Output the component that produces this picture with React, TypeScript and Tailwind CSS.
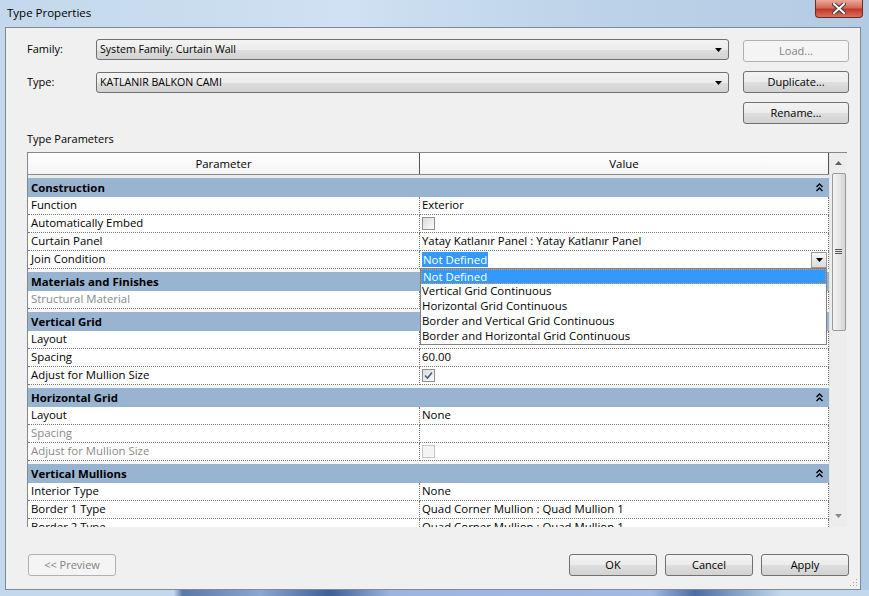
import React from "react";

type Row = {
  label: string;
  value?: string;
  check?: boolean;
  disabled?: boolean;
  combo?: boolean;
};

type Group = { name: string; rows: Row[] };

const groups: Group[] = [
  {
    name: "Construction",
    rows: [
      { label: "Function", value: "Exterior" },
      { label: "Automatically Embed", check: false },
      { label: "Curtain Panel", value: "Yatay Katlanır Panel : Yatay Katlanır Panel" },
      { label: "Join Condition", combo: true },
    ],
  },
  {
    name: "Materials and Finishes",
    rows: [{ label: "Structural Material", disabled: true, value: "" }],
  },
  {
    name: "Vertical Grid",
    rows: [
      { label: "Layout", value: "" },
      { label: "Spacing", value: "60.00" },
      { label: "Adjust for Mullion Size", check: true },
    ],
  },
  {
    name: "Horizontal Grid",
    rows: [
      { label: "Layout", value: "None" },
      { label: "Spacing", disabled: true, value: "" },
      { label: "Adjust for Mullion Size", disabled: true, check: false },
    ],
  },
  {
    name: "Vertical Mullions",
    rows: [
      { label: "Interior Type", value: "None" },
      { label: "Border 1 Type", value: "Quad Corner Mullion : Quad Mullion 1" },
      { label: "Border 2 Type", value: "Quad Corner Mullion : Quad Mullion 1" },
    ],
  },
];

const joinOptions = [
  "Not Defined",
  "Vertical Grid Continuous",
  "Horizontal Grid Continuous",
  "Border and Vertical Grid Continuous",
  "Border and Horizontal Grid Continuous",
];

const btnFace =
  "bg-[linear-gradient(#f3f3f3_0%,#ececec_50%,#dedede_50%,#d2d2d2_100%)] border border-[#707070] rounded-[3px]";

const Triangle = ({ color = "#000" }: { color?: string }) => (
  <svg width="7" height="4" viewBox="0 0 7 4">
    <path d="M0 0h7L3.5 4z" fill={color} />
  </svg>
);

const Chevrons = () => (
  <svg width="7" height="9" viewBox="0 0 7 9">
    <path d="M0.5 4L3.5 1L6.5 4M0.5 8L3.5 5L6.5 8" stroke="#000" strokeWidth="1.4" fill="none" />
  </svg>
);

const CheckBox = ({ checked, disabled }: { checked: boolean; disabled?: boolean }) => (
  <div
    className={`mt-[2px] h-[13px] w-[13px] border ${
      disabled
        ? "border-[#c6c6c6] bg-[#f4f4f4]"
        : "border-[#8e8f8f] bg-[linear-gradient(135deg,#dcdcdc,#fbfbfb)]"
    } flex items-center justify-center`}
  >
    {checked && (
      <svg width="9" height="9" viewBox="0 0 9 9">
        <path d="M1 4.5L3.5 7L8 1.5" stroke="#4d5f86" strokeWidth="1.6" fill="none" />
      </svg>
    )}
  </div>
);

const SelectBox = ({ text }: { text: string }) => (
  <div className={`flex h-[21px] w-[633px] items-center justify-between pl-[3px] pr-[6px] ${btnFace}`}>
    <span className="text-[10.6px]">{text}</span>
    <Triangle />
  </div>
);

const Button = ({ text, disabled, className = "" }: { text: string; disabled?: boolean; className?: string }) => (
  <div
    className={`flex h-[22px] items-center justify-center ${
      disabled
        ? "rounded-[3px] border border-[#adb2b5] bg-[#f4f4f4] text-[#838383]"
        : `${btnFace} text-black`
    } ${className}`}
  >
    {text}
  </div>
);

const ParamRow = ({ row }: { row: Row }) => (
  <div className="flex h-[18px] shrink-0">
    <div
      className={`w-[392px] shrink-0 truncate border-b border-r border-dotted border-[#7a7a7a] pl-[3px] leading-[15px] ${
        row.disabled ? "text-[#8a8a8a]" : "text-black"
      }`}
    >
      {row.label}
    </div>
    <div className="relative flex-1 border-b border-r border-dotted border-[#7a7a7a] pl-[2px] leading-[15px]">
      {row.check !== undefined && <CheckBox checked={row.check} disabled={row.disabled} />}
      {row.value !== undefined && <span>{row.value}</span>}
      {row.combo && (
        <>
          <div className="flex h-[17px] items-center justify-between bg-white pr-[1px]">
            <span className="bg-[#3399ff] px-[1px] leading-[15px] text-white">Not Defined</span>
            <div className="flex h-[16px] w-[16px] items-center justify-center border border-[#9a9a9a] bg-[linear-gradient(#f6f6f6,#dcdcdc)]">
              <Triangle />
            </div>
          </div>
          <div className="absolute left-0 right-[1px] top-[17px] z-10 flex flex-col border border-[#828282] bg-white">
            {joinOptions.map((o, i) => (
              <div
                key={o}
                className={`h-[15px] pl-[1px] leading-[13px] ${
                  i === 0 ? "border border-dotted border-[#e89a50] bg-[#3399ff] text-white" : "text-black"
                }`}
              >
                {o}
              </div>
            ))}
          </div>
        </>
      )}
    </div>
  </div>
);

const GroupHeader = ({ name, first }: { name: string; first?: boolean }) => (
  <div className={`shrink-0 ${first ? "pt-[3px] bg-[#ebebeb]" : "pt-[3px] bg-[#f5f5f5]"}`}>
    <div className="flex h-[19px] items-center justify-between bg-[#99b4d1] pl-[3px] pr-[6px] font-bold">
      <span className="leading-[15px]">{name}</span>
      <Chevrons />
    </div>
  </div>
);

export default function App() {
  return (
    <div className="flex h-[596px] w-[869px] flex-col overflow-hidden bg-[linear-gradient(90deg,#c3d8ec,#cfe1f2_40%,#bcd2e8_70%,#b2cbe4)] font-['Open_Sans',sans-serif] text-[11.4px] text-black">
      {/* title bar */}
      <div className="flex h-[27px] shrink-0 items-start justify-between">
        <div className="pl-[7px] pt-[4px] text-[11.5px]">Type Properties</div>
        <div className="mr-[6px] flex h-[18px] w-[48px] items-center justify-center rounded-b-[4px] border border-t-0 border-[#6b2a22] bg-[linear-gradient(#e9a99c,#d46a57_45%,#c0392b_55%,#d9705c)]">
          <svg width="14" height="11" viewBox="0 0 14 11">
            <path d="M2 1L12 10M12 1L2 10" stroke="#3a3a3a" strokeWidth="4" strokeLinecap="square" />
            <path d="M2 1L12 10M12 1L2 10" stroke="#ffffff" strokeWidth="2" strokeLinecap="square" />
          </svg>
        </div>
      </div>

      {/* client area */}
      <div className="relative ml-[5px] mr-[8px] flex h-[563px] shrink-0 flex-col border border-[#7e8a99] bg-[#f0f0f0]">
        <div className="flex">
          <div className="flex flex-col gap-[12px] pl-[21px] pt-[11px] text-[11px]">
            <div className="flex items-center">
              <span className="w-[69px]">Family:</span>
              <SelectBox text="System Family: Curtain Wall" />
            </div>
            <div className="flex items-center">
              <span className="w-[69px]">Type:</span>
              <SelectBox text="KATLANIR BALKON CAMI" />
            </div>
          </div>
          <div className="ml-[14px] flex flex-col gap-[9px] pt-[12px] text-[11px]">
            <Button text="Load..." disabled className="w-[106px]" />
            <Button text="Duplicate..." className="w-[106px]" />
            <Button text="Rename..." className="w-[106px]" />
          </div>
        </div>

        <div className="ml-[21px] mt-[8px] text-[11px] leading-[13px]">Type Parameters</div>

        {/* property grid */}
        <div className="ml-[21px] mt-[7px] flex h-[375px] w-[820px] overflow-hidden border-l border-t border-[#828790]">
          <div className="flex w-[801px] shrink-0 flex-col overflow-hidden bg-white">
            <div className="flex h-[22px] shrink-0 border-b border-[#8a8a8a] bg-[linear-gradient(#ffffff,#f4f4f4)]">
              <div className="flex w-[392px] shrink-0 items-center justify-center border-r border-[#555]">Parameter</div>
              <div className="flex flex-1 items-center justify-center border-r border-[#555]">Value</div>
            </div>
            {groups.map((g, gi) => (
              <React.Fragment key={g.name}>
                <GroupHeader name={g.name} first={gi === 0} />
                {g.rows.map((r) => (
                  <ParamRow key={g.name + r.label} row={r} />
                ))}
              </React.Fragment>
            ))}
          </div>
          {/* scrollbar */}
          <div className="flex w-[18px] shrink-0 flex-col items-center border-l border-[#e3e3e3] bg-[#ededed]">
            <div className="flex h-[19px] w-full items-center justify-center">
              <svg width="7" height="4" viewBox="0 0 7 4">
                <path d="M0 4h7L3.5 0z" fill="#606060" />
              </svg>
            </div>
            <div className="mt-[1px] flex h-[158px] w-[14px] items-center justify-center rounded-[2px] border border-[#9a9a9a] bg-[linear-gradient(90deg,#f4f4f4,#e6e6e6_50%,#d6d6d6)]">
              <svg width="7" height="6" viewBox="0 0 7 6">
                <path d="M0 0.5h7M0 2.5h7M0 4.5h7" stroke="#555" strokeWidth="1" />
              </svg>
            </div>
            <div className="flex-1" />
            <div className="flex h-[19px] w-full items-center justify-center pb-[4px]">
              <Triangle color="#8a8a8a" />
            </div>
          </div>
        </div>

        {/* bottom buttons */}
        <div className="mt-[27px] flex items-center pl-[22px] pr-[11px] text-[11px]">
          <Button text="<< Preview" disabled className="w-[88px]" />
          <div className="flex-1" />
          <div className="flex gap-[8px]">
            <Button text="OK" className="w-[88px]" />
            <Button text="Cancel" className="w-[88px]" />
            <Button text="Apply" className="w-[88px]" />
          </div>
        </div>

        <svg className="absolute bottom-[2px] right-[2px]" width="10" height="10" viewBox="0 0 10 10">
          <g fill="#a8a8a8">
            <rect x="8" y="2" width="1" height="1" />
            <rect x="5" y="5" width="1" height="1" />
            <rect x="8" y="5" width="1" height="1" />
            <rect x="2" y="8" width="1" height="1" />
            <rect x="5" y="8" width="1" height="1" />
            <rect x="8" y="8" width="1" height="1" />
          </g>
        </svg>
      </div>

      <div className="h-[6px] shrink-0 bg-[linear-gradient(90deg,#c3d8ec_0%,#c3d8ec_20%,#5a78a8_21%,#8aa6d2_30%,#3e5f95_38%,#9cb4e0_45%,#a2b9e4_75%,#4c6da3_80%,#c3d8ec_90%)]" />
    </div>
  );
}
